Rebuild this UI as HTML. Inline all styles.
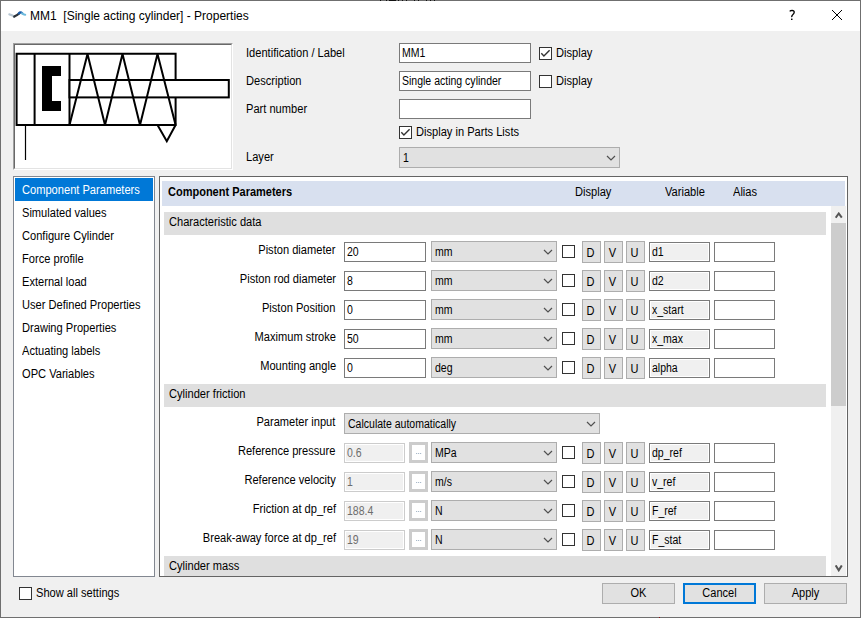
<!DOCTYPE html><html><head><meta charset="utf-8"><style>
html,body{margin:0;padding:0;width:861px;height:618px;overflow:hidden;background:#f0f0f0;font-family:"Liberation Sans", sans-serif;}
.t{position:absolute;font-size:11px;line-height:13px;white-space:pre;color:#000;}
.b{font-weight:bold}
.T{font-size:12px;line-height:14px;transform-origin:left top}
</style></head><body>
<div style="position:absolute;left:0px;top:0px;width:861px;height:618px;box-sizing:border-box;border:1px solid #6f6f6f;background:#f0f0f0"></div>
<div style="position:absolute;left:1px;top:1px;width:859px;height:30px;box-sizing:border-box;background:#fff"></div>
<div style="position:absolute;left:380px;top:0;width:1px;height:1px;background:#111"></div>
<div style="position:absolute;left:386px;top:0;width:1px;height:1px;background:#111"></div>
<div style="position:absolute;left:389px;top:0;width:1px;height:1px;background:#111"></div>
<div style="position:absolute;left:390px;top:0;width:1px;height:1px;background:#111"></div>
<div style="position:absolute;left:391px;top:0;width:1px;height:1px;background:#111"></div>
<div style="position:absolute;left:392px;top:0;width:1px;height:1px;background:#111"></div>
<div style="position:absolute;left:393px;top:0;width:1px;height:1px;background:#111"></div>
<div style="position:absolute;left:394px;top:0;width:1px;height:1px;background:#111"></div>
<div style="position:absolute;left:395px;top:0;width:1px;height:1px;background:#111"></div>
<div style="position:absolute;left:398px;top:0;width:1px;height:1px;background:#111"></div>
<div style="position:absolute;left:402px;top:0;width:1px;height:1px;background:#111"></div>
<div style="position:absolute;left:406px;top:0;width:1px;height:1px;background:#111"></div>
<div style="position:absolute;left:414px;top:0;width:1px;height:1px;background:#111"></div>
<div style="position:absolute;left:418px;top:0;width:1px;height:1px;background:#111"></div>
<div style="position:absolute;left:426px;top:0;width:1px;height:1px;background:#111"></div>
<div style="position:absolute;left:430px;top:0;width:1px;height:1px;background:#111"></div>
<div style="position:absolute;left:434px;top:0;width:1px;height:1px;background:#111"></div>
<div style="position:absolute;left:659px;top:617px;width:1px;height:1px;background:#8a1010"></div>
<svg style="position:absolute;left:8px;top:10px" width="19" height="9" viewBox="0 0 19 9"><path d="M1.4 4.3 Q4 4.8 6.3 6.6" stroke="#b7c7d3" stroke-width="2.3" fill="none" stroke-linecap="round"/><path d="M6.3 6.6 Q9 5.2 11.3 3.4" stroke="#2c3238" stroke-width="2.3" fill="none" stroke-linecap="round"/><path d="M10.8 3.4 Q12.4 1.5 14.2 3.3" stroke="#1858a8" stroke-width="2.3" fill="none" stroke-linecap="round"/><path d="M14 3.3 Q15.5 4.8 17.2 4.7" stroke="#6cbadd" stroke-width="2.1" fill="none" stroke-linecap="round"/></svg>
<div class="t" style="left:30px;top:9px;font-size:12px;line-height:14px;color:#000">MM1  [Single acting cylinder] - Properties</div>
<svg style="position:absolute;left:788px;top:8px" width="10" height="14" viewBox="0 0 10 14"><path d="M1.7 3.4 Q2.6 2.4 4.1 2.4 Q6.3 2.5 6.2 4.3 Q6.1 5.5 4.9 6.6 Q3.6 7.7 3.7 9.1" fill="none" stroke="#000" stroke-width="1.35"/><rect x="3" y="10.6" width="1.5" height="1.4" fill="#000"/></svg>
<svg style="position:absolute;left:832px;top:10px" width="11" height="11" viewBox="0 0 11 11"><path d="M0 0 L10 10 M10 0 L0 10" stroke="#000" stroke-width="1"/></svg>
<div style="position:absolute;left:13px;top:43px;width:220px;height:127px;box-sizing:border-box;border:1px solid #a0a0a0;border-right-color:#fff;border-bottom-color:#fff;background:#fff"></div>
<div style="position:absolute;left:14px;top:44px;width:218px;height:125px;box-sizing:border-box;border:1px solid #696969;border-right-color:#e3e3e3;border-bottom-color:#e3e3e3;background:#fff"></div>
<svg style="position:absolute;left:0;top:0" width="240" height="175" viewBox="0 0 240 175"><g fill="none" stroke="#000" stroke-width="2"><rect x="16.6" y="53.75" width="159" height="71.25"/><line x1="34.6" y1="54" x2="34.6" y2="125"/><line x1="69.5" y1="54" x2="69.5" y2="125"/><rect x="69.5" y="80" width="159.3" height="17.4" fill="#fff"/><polyline points="69.5,125 87.5,54 105,125 122.5,54 140,125 157.5,54 175.6,125"/><polyline points="157.5,125 166.8,141.2 175.6,125"/></g><line x1="25.5" y1="125" x2="25.5" y2="160" stroke="#000" stroke-width="1.2"/><path d="M42 66 H61 V76 H52 V101 H61 V111 H42 Z" fill="#000"/></svg>
<div class="t T " style="left:246px;top:46px;transform:scaleX(0.925);">Identification / Label</div>
<div class="t T " style="left:246px;top:74px;transform:scaleX(0.925);">Description</div>
<div class="t T " style="left:246px;top:102px;transform:scaleX(0.925);">Part number</div>
<div class="t T " style="left:246px;top:150px;transform:scaleX(0.925);">Layer</div>
<div style="position:absolute;left:399px;top:43px;width:132px;height:20px;box-sizing:border-box;border:1px solid #7a7a7a;background:#fff"></div>
<div class="t T " style="left:402px;top:46px;transform:scaleX(0.876);">MM1</div>
<div style="position:absolute;left:399px;top:71px;width:132px;height:20px;box-sizing:border-box;border:1px solid #7a7a7a;background:#fff"></div>
<div class="t T " style="left:402px;top:74px;transform:scaleX(0.876);">Single acting cylinder</div>
<div style="position:absolute;left:399px;top:99px;width:132px;height:20px;box-sizing:border-box;border:1px solid #7a7a7a;background:#fff"></div>
<div style="position:absolute;left:539px;top:47px;width:13px;height:13px;box-sizing:border-box;border:1px solid #333333;background:#fff"></div>
<svg style="position:absolute;left:539px;top:47px" width="13" height="13" viewBox="0 0 13 13"><path d="M2.3 6.3 L4.9 9 L10.6 3.3" fill="none" stroke="#333" stroke-width="1.4"/></svg>
<div class="t T " style="left:556px;top:46px;transform:scaleX(0.925);">Display</div>
<div style="position:absolute;left:539px;top:75px;width:13px;height:13px;box-sizing:border-box;border:1px solid #333333;background:#fff"></div>
<div class="t T " style="left:556px;top:74px;transform:scaleX(0.925);">Display</div>
<div style="position:absolute;left:399px;top:126px;width:13px;height:13px;box-sizing:border-box;border:1px solid #333333;background:#fff"></div>
<svg style="position:absolute;left:399px;top:126px" width="13" height="13" viewBox="0 0 13 13"><path d="M2.3 6.3 L4.9 9 L10.6 3.3" fill="none" stroke="#333" stroke-width="1.4"/></svg>
<div class="t T " style="left:416px;top:125px;transform:scaleX(0.925);">Display in Parts Lists</div>
<div style="position:absolute;left:399px;top:147px;width:221px;height:21px;box-sizing:border-box;border:1px solid #adadad;background:#e1e1e1"></div>
<div class="t T " style="left:403px;top:151px;transform:scaleX(0.876);">1</div>
<svg style="position:absolute;left:606px;top:155px" width="10" height="6" viewBox="0 0 10 6"><path d="M1 1 L5 5 L9 1" fill="none" stroke="#505050" stroke-width="1.2"/></svg>
<div style="position:absolute;left:13px;top:176px;width:142px;height:401px;box-sizing:border-box;border:1px solid #828790;background:#fff"></div>
<div style="position:absolute;left:15px;top:178px;width:138px;height:23px;box-sizing:border-box;background:#0078d7"></div>
<div class="t T " style="left:22px;top:183px;transform:scaleX(0.925);color:#fff">Component Parameters</div>
<div class="t T " style="left:22px;top:206px;transform:scaleX(0.925);">Simulated values</div>
<div class="t T " style="left:22px;top:229px;transform:scaleX(0.925);">Configure Cylinder</div>
<div class="t T " style="left:22px;top:252px;transform:scaleX(0.925);">Force profile</div>
<div class="t T " style="left:22px;top:275px;transform:scaleX(0.925);">External load</div>
<div class="t T " style="left:22px;top:298px;transform:scaleX(0.925);">User Defined Properties</div>
<div class="t T " style="left:22px;top:321px;transform:scaleX(0.925);">Drawing Properties</div>
<div class="t T " style="left:22px;top:344px;transform:scaleX(0.925);">Actuating labels</div>
<div class="t T " style="left:22px;top:367px;transform:scaleX(0.925);">OPC Variables</div>
<div style="position:absolute;left:159px;top:176px;width:689px;height:401px;box-sizing:border-box;border:1px solid #646464;background:#fff"></div>
<div style="position:absolute;left:162px;top:181px;width:683px;height:25px;box-sizing:border-box;background:#d8e0ef"></div>
<div class="t T b" style="left:168px;top:185px;transform:scaleX(0.917);">Component Parameters</div>
<div class="t T " style="left:575px;top:185px;transform:scaleX(0.925);">Display</div>
<div class="t T " style="left:665px;top:185px;transform:scaleX(0.925);">Variable</div>
<div class="t T " style="left:733px;top:185px;transform:scaleX(0.925);">Alias</div>
<div style="position:absolute;left:831px;top:206px;width:15px;height:370px;box-sizing:border-box;background:#f0f0f0"></div>
<div style="position:absolute;left:831px;top:223px;width:15px;height:183px;box-sizing:border-box;background:#cdcdcd"></div>
<svg style="position:absolute;left:835px;top:212px" width="8" height="7" viewBox="0 0 8 7"><path d="M0.7 5.7 L3.75 1.5 L6.8 5.7" fill="none" stroke="#555" stroke-width="2"/></svg>
<svg style="position:absolute;left:835px;top:565px" width="8" height="7" viewBox="0 0 8 7"><path d="M0.7 0.4 L3.75 5.3 L6.8 0.4" fill="none" stroke="#555" stroke-width="2"/></svg>
<div style="position:absolute;left:164px;top:212px;width:662px;height:23px;box-sizing:border-box;background:#dfdfdf"></div>
<div class="t T " style="left:169px;top:215px;transform:scaleX(0.925);">Characteristic data</div>
<div class="t T" style="right:525.4px;top:243px;transform:scaleX(0.925);transform-origin:right top;">Piston diameter</div>
<div style="position:absolute;left:344px;top:242px;width:82px;height:20px;box-sizing:border-box;border:1px solid #7a7a7a;background:#fff"></div>
<div class="t T " style="left:347px;top:245px;transform:scaleX(0.876);">20</div>
<div style="position:absolute;left:431px;top:241px;width:126px;height:21px;box-sizing:border-box;border:1px solid #adadad;background:#e1e1e1"></div>
<div class="t T " style="left:435px;top:245px;transform:scaleX(0.876);">mm</div>
<svg style="position:absolute;left:543px;top:249px" width="10" height="6" viewBox="0 0 10 6"><path d="M1 1 L5 5 L9 1" fill="none" stroke="#505050" stroke-width="1.2"/></svg>
<div style="position:absolute;left:562px;top:245px;width:13px;height:13px;box-sizing:border-box;border:1px solid #333333;background:#fff"></div>
<div style="position:absolute;left:582px;top:241px;width:19px;height:22px;box-sizing:border-box;border:1px solid #adadad;background:#e1e1e1"></div>
<div class="t T" style="left:580.5px;top:246px;width:19px;text-align:center;transform:scaleX(0.917);transform-origin:center top">D</div>
<div style="position:absolute;left:604px;top:241px;width:19px;height:22px;box-sizing:border-box;border:1px solid #adadad;background:#e1e1e1"></div>
<div class="t T" style="left:602.5px;top:246px;width:19px;text-align:center;transform:scaleX(0.917);transform-origin:center top">V</div>
<div style="position:absolute;left:626px;top:241px;width:19px;height:22px;box-sizing:border-box;border:1px solid #adadad;background:#e1e1e1"></div>
<div class="t T" style="left:624.5px;top:246px;width:19px;text-align:center;transform:scaleX(0.917);transform-origin:center top">U</div>
<div style="position:absolute;left:649px;top:242px;width:61px;height:20px;box-sizing:border-box;border:1px solid #7a7a7a;background:#f0f0f0;box-shadow:inset 0 0 0 1px #fff"></div>
<div class="t T " style="left:652px;top:245px;transform:scaleX(0.876);">d1</div>
<div style="position:absolute;left:714px;top:242px;width:61px;height:20px;box-sizing:border-box;border:1px solid #7a7a7a;background:#fff"></div>
<div class="t T" style="right:525.4px;top:272px;transform:scaleX(0.925);transform-origin:right top;">Piston rod diameter</div>
<div style="position:absolute;left:344px;top:271px;width:82px;height:20px;box-sizing:border-box;border:1px solid #7a7a7a;background:#fff"></div>
<div class="t T " style="left:347px;top:274px;transform:scaleX(0.876);">8</div>
<div style="position:absolute;left:431px;top:270px;width:126px;height:21px;box-sizing:border-box;border:1px solid #adadad;background:#e1e1e1"></div>
<div class="t T " style="left:435px;top:274px;transform:scaleX(0.876);">mm</div>
<svg style="position:absolute;left:543px;top:278px" width="10" height="6" viewBox="0 0 10 6"><path d="M1 1 L5 5 L9 1" fill="none" stroke="#505050" stroke-width="1.2"/></svg>
<div style="position:absolute;left:562px;top:274px;width:13px;height:13px;box-sizing:border-box;border:1px solid #333333;background:#fff"></div>
<div style="position:absolute;left:582px;top:270px;width:19px;height:22px;box-sizing:border-box;border:1px solid #adadad;background:#e1e1e1"></div>
<div class="t T" style="left:580.5px;top:275px;width:19px;text-align:center;transform:scaleX(0.917);transform-origin:center top">D</div>
<div style="position:absolute;left:604px;top:270px;width:19px;height:22px;box-sizing:border-box;border:1px solid #adadad;background:#e1e1e1"></div>
<div class="t T" style="left:602.5px;top:275px;width:19px;text-align:center;transform:scaleX(0.917);transform-origin:center top">V</div>
<div style="position:absolute;left:626px;top:270px;width:19px;height:22px;box-sizing:border-box;border:1px solid #adadad;background:#e1e1e1"></div>
<div class="t T" style="left:624.5px;top:275px;width:19px;text-align:center;transform:scaleX(0.917);transform-origin:center top">U</div>
<div style="position:absolute;left:649px;top:271px;width:61px;height:20px;box-sizing:border-box;border:1px solid #7a7a7a;background:#f0f0f0;box-shadow:inset 0 0 0 1px #fff"></div>
<div class="t T " style="left:652px;top:274px;transform:scaleX(0.876);">d2</div>
<div style="position:absolute;left:714px;top:271px;width:61px;height:20px;box-sizing:border-box;border:1px solid #7a7a7a;background:#fff"></div>
<div class="t T" style="right:525.4px;top:301px;transform:scaleX(0.925);transform-origin:right top;">Piston Position</div>
<div style="position:absolute;left:344px;top:300px;width:82px;height:20px;box-sizing:border-box;border:1px solid #7a7a7a;background:#fff"></div>
<div class="t T " style="left:347px;top:303px;transform:scaleX(0.876);">0</div>
<div style="position:absolute;left:431px;top:299px;width:126px;height:21px;box-sizing:border-box;border:1px solid #adadad;background:#e1e1e1"></div>
<div class="t T " style="left:435px;top:303px;transform:scaleX(0.876);">mm</div>
<svg style="position:absolute;left:543px;top:307px" width="10" height="6" viewBox="0 0 10 6"><path d="M1 1 L5 5 L9 1" fill="none" stroke="#505050" stroke-width="1.2"/></svg>
<div style="position:absolute;left:562px;top:303px;width:13px;height:13px;box-sizing:border-box;border:1px solid #333333;background:#fff"></div>
<div style="position:absolute;left:582px;top:299px;width:19px;height:22px;box-sizing:border-box;border:1px solid #adadad;background:#e1e1e1"></div>
<div class="t T" style="left:580.5px;top:304px;width:19px;text-align:center;transform:scaleX(0.917);transform-origin:center top">D</div>
<div style="position:absolute;left:604px;top:299px;width:19px;height:22px;box-sizing:border-box;border:1px solid #adadad;background:#e1e1e1"></div>
<div class="t T" style="left:602.5px;top:304px;width:19px;text-align:center;transform:scaleX(0.917);transform-origin:center top">V</div>
<div style="position:absolute;left:626px;top:299px;width:19px;height:22px;box-sizing:border-box;border:1px solid #adadad;background:#e1e1e1"></div>
<div class="t T" style="left:624.5px;top:304px;width:19px;text-align:center;transform:scaleX(0.917);transform-origin:center top">U</div>
<div style="position:absolute;left:649px;top:300px;width:61px;height:20px;box-sizing:border-box;border:1px solid #7a7a7a;background:#f0f0f0;box-shadow:inset 0 0 0 1px #fff"></div>
<div class="t T " style="left:652px;top:303px;transform:scaleX(0.876);">x_start</div>
<div style="position:absolute;left:714px;top:300px;width:61px;height:20px;box-sizing:border-box;border:1px solid #7a7a7a;background:#fff"></div>
<div class="t T" style="right:525.4px;top:330px;transform:scaleX(0.925);transform-origin:right top;">Maximum stroke</div>
<div style="position:absolute;left:344px;top:329px;width:82px;height:20px;box-sizing:border-box;border:1px solid #7a7a7a;background:#fff"></div>
<div class="t T " style="left:347px;top:332px;transform:scaleX(0.876);">50</div>
<div style="position:absolute;left:431px;top:328px;width:126px;height:21px;box-sizing:border-box;border:1px solid #adadad;background:#e1e1e1"></div>
<div class="t T " style="left:435px;top:332px;transform:scaleX(0.876);">mm</div>
<svg style="position:absolute;left:543px;top:336px" width="10" height="6" viewBox="0 0 10 6"><path d="M1 1 L5 5 L9 1" fill="none" stroke="#505050" stroke-width="1.2"/></svg>
<div style="position:absolute;left:562px;top:332px;width:13px;height:13px;box-sizing:border-box;border:1px solid #333333;background:#fff"></div>
<div style="position:absolute;left:582px;top:328px;width:19px;height:22px;box-sizing:border-box;border:1px solid #adadad;background:#e1e1e1"></div>
<div class="t T" style="left:580.5px;top:333px;width:19px;text-align:center;transform:scaleX(0.917);transform-origin:center top">D</div>
<div style="position:absolute;left:604px;top:328px;width:19px;height:22px;box-sizing:border-box;border:1px solid #adadad;background:#e1e1e1"></div>
<div class="t T" style="left:602.5px;top:333px;width:19px;text-align:center;transform:scaleX(0.917);transform-origin:center top">V</div>
<div style="position:absolute;left:626px;top:328px;width:19px;height:22px;box-sizing:border-box;border:1px solid #adadad;background:#e1e1e1"></div>
<div class="t T" style="left:624.5px;top:333px;width:19px;text-align:center;transform:scaleX(0.917);transform-origin:center top">U</div>
<div style="position:absolute;left:649px;top:329px;width:61px;height:20px;box-sizing:border-box;border:1px solid #7a7a7a;background:#f0f0f0;box-shadow:inset 0 0 0 1px #fff"></div>
<div class="t T " style="left:652px;top:332px;transform:scaleX(0.876);">x_max</div>
<div style="position:absolute;left:714px;top:329px;width:61px;height:20px;box-sizing:border-box;border:1px solid #7a7a7a;background:#fff"></div>
<div class="t T" style="right:525.4px;top:359px;transform:scaleX(0.925);transform-origin:right top;">Mounting angle</div>
<div style="position:absolute;left:344px;top:358px;width:82px;height:20px;box-sizing:border-box;border:1px solid #7a7a7a;background:#fff"></div>
<div class="t T " style="left:347px;top:361px;transform:scaleX(0.876);">0</div>
<div style="position:absolute;left:431px;top:357px;width:126px;height:21px;box-sizing:border-box;border:1px solid #adadad;background:#e1e1e1"></div>
<div class="t T " style="left:435px;top:361px;transform:scaleX(0.876);">deg</div>
<svg style="position:absolute;left:543px;top:365px" width="10" height="6" viewBox="0 0 10 6"><path d="M1 1 L5 5 L9 1" fill="none" stroke="#505050" stroke-width="1.2"/></svg>
<div style="position:absolute;left:562px;top:361px;width:13px;height:13px;box-sizing:border-box;border:1px solid #333333;background:#fff"></div>
<div style="position:absolute;left:582px;top:357px;width:19px;height:22px;box-sizing:border-box;border:1px solid #adadad;background:#e1e1e1"></div>
<div class="t T" style="left:580.5px;top:362px;width:19px;text-align:center;transform:scaleX(0.917);transform-origin:center top">D</div>
<div style="position:absolute;left:604px;top:357px;width:19px;height:22px;box-sizing:border-box;border:1px solid #adadad;background:#e1e1e1"></div>
<div class="t T" style="left:602.5px;top:362px;width:19px;text-align:center;transform:scaleX(0.917);transform-origin:center top">V</div>
<div style="position:absolute;left:626px;top:357px;width:19px;height:22px;box-sizing:border-box;border:1px solid #adadad;background:#e1e1e1"></div>
<div class="t T" style="left:624.5px;top:362px;width:19px;text-align:center;transform:scaleX(0.917);transform-origin:center top">U</div>
<div style="position:absolute;left:649px;top:358px;width:61px;height:20px;box-sizing:border-box;border:1px solid #7a7a7a;background:#f0f0f0;box-shadow:inset 0 0 0 1px #fff"></div>
<div class="t T " style="left:652px;top:361px;transform:scaleX(0.876);">alpha</div>
<div style="position:absolute;left:714px;top:358px;width:61px;height:20px;box-sizing:border-box;border:1px solid #7a7a7a;background:#fff"></div>
<div style="position:absolute;left:164px;top:384px;width:662px;height:23px;box-sizing:border-box;background:#dfdfdf"></div>
<div class="t T " style="left:169px;top:387px;transform:scaleX(0.925);">Cylinder friction</div>
<div class="t T" style="right:525.4px;top:415px;transform:scaleX(0.925);transform-origin:right top;">Parameter input</div>
<div style="position:absolute;left:344px;top:413px;width:256px;height:21px;box-sizing:border-box;border:1px solid #adadad;background:#e1e1e1"></div>
<div class="t T " style="left:348px;top:417px;transform:scaleX(0.876);">Calculate automatically</div>
<svg style="position:absolute;left:586px;top:421px" width="10" height="6" viewBox="0 0 10 6"><path d="M1 1 L5 5 L9 1" fill="none" stroke="#505050" stroke-width="1.2"/></svg>
<div class="t T" style="right:525.4px;top:444px;transform:scaleX(0.925);transform-origin:right top;">Reference pressure</div>
<div style="position:absolute;left:344px;top:443px;width:61px;height:20px;box-sizing:border-box;border:1px solid #cccccc;background:#f0f0f0;box-shadow:inset 0 0 0 1px #fff"></div>
<div class="t T " style="left:347px;top:446px;transform:scaleX(0.876);color:#6d6d6d">0.6</div>
<div style="position:absolute;left:409px;top:442px;width:19px;height:21px;box-sizing:border-box;border:3px solid #cccccc;background:#fff"></div>
<div style="position:absolute;left:416px;top:453px;width:6px;height:1px;background:repeating-linear-gradient(90deg,#a9b9c9 0 1px,#eef2f6 1px 2px)"></div>
<div style="position:absolute;left:431px;top:442px;width:126px;height:21px;box-sizing:border-box;border:1px solid #adadad;background:#e1e1e1"></div>
<div class="t T " style="left:435px;top:446px;transform:scaleX(0.876);">MPa</div>
<svg style="position:absolute;left:543px;top:450px" width="10" height="6" viewBox="0 0 10 6"><path d="M1 1 L5 5 L9 1" fill="none" stroke="#505050" stroke-width="1.2"/></svg>
<div style="position:absolute;left:562px;top:446px;width:13px;height:13px;box-sizing:border-box;border:1px solid #333333;background:#fff"></div>
<div style="position:absolute;left:582px;top:442px;width:19px;height:22px;box-sizing:border-box;border:1px solid #adadad;background:#e1e1e1"></div>
<div class="t T" style="left:580.5px;top:447px;width:19px;text-align:center;transform:scaleX(0.917);transform-origin:center top">D</div>
<div style="position:absolute;left:604px;top:442px;width:19px;height:22px;box-sizing:border-box;border:1px solid #adadad;background:#e1e1e1"></div>
<div class="t T" style="left:602.5px;top:447px;width:19px;text-align:center;transform:scaleX(0.917);transform-origin:center top">V</div>
<div style="position:absolute;left:626px;top:442px;width:19px;height:22px;box-sizing:border-box;border:1px solid #adadad;background:#e1e1e1"></div>
<div class="t T" style="left:624.5px;top:447px;width:19px;text-align:center;transform:scaleX(0.917);transform-origin:center top">U</div>
<div style="position:absolute;left:649px;top:443px;width:61px;height:20px;box-sizing:border-box;border:1px solid #7a7a7a;background:#f0f0f0;box-shadow:inset 0 0 0 1px #fff"></div>
<div class="t T " style="left:652px;top:446px;transform:scaleX(0.876);">dp_ref</div>
<div style="position:absolute;left:714px;top:443px;width:61px;height:20px;box-sizing:border-box;border:1px solid #7a7a7a;background:#fff"></div>
<div class="t T" style="right:525.4px;top:473px;transform:scaleX(0.925);transform-origin:right top;">Reference velocity</div>
<div style="position:absolute;left:344px;top:472px;width:61px;height:20px;box-sizing:border-box;border:1px solid #cccccc;background:#f0f0f0;box-shadow:inset 0 0 0 1px #fff"></div>
<div class="t T " style="left:347px;top:475px;transform:scaleX(0.876);color:#6d6d6d">1</div>
<div style="position:absolute;left:409px;top:471px;width:19px;height:21px;box-sizing:border-box;border:3px solid #cccccc;background:#fff"></div>
<div style="position:absolute;left:416px;top:482px;width:6px;height:1px;background:repeating-linear-gradient(90deg,#a9b9c9 0 1px,#eef2f6 1px 2px)"></div>
<div style="position:absolute;left:431px;top:471px;width:126px;height:21px;box-sizing:border-box;border:1px solid #adadad;background:#e1e1e1"></div>
<div class="t T " style="left:435px;top:475px;transform:scaleX(0.876);">m/s</div>
<svg style="position:absolute;left:543px;top:479px" width="10" height="6" viewBox="0 0 10 6"><path d="M1 1 L5 5 L9 1" fill="none" stroke="#505050" stroke-width="1.2"/></svg>
<div style="position:absolute;left:562px;top:475px;width:13px;height:13px;box-sizing:border-box;border:1px solid #333333;background:#fff"></div>
<div style="position:absolute;left:582px;top:471px;width:19px;height:22px;box-sizing:border-box;border:1px solid #adadad;background:#e1e1e1"></div>
<div class="t T" style="left:580.5px;top:476px;width:19px;text-align:center;transform:scaleX(0.917);transform-origin:center top">D</div>
<div style="position:absolute;left:604px;top:471px;width:19px;height:22px;box-sizing:border-box;border:1px solid #adadad;background:#e1e1e1"></div>
<div class="t T" style="left:602.5px;top:476px;width:19px;text-align:center;transform:scaleX(0.917);transform-origin:center top">V</div>
<div style="position:absolute;left:626px;top:471px;width:19px;height:22px;box-sizing:border-box;border:1px solid #adadad;background:#e1e1e1"></div>
<div class="t T" style="left:624.5px;top:476px;width:19px;text-align:center;transform:scaleX(0.917);transform-origin:center top">U</div>
<div style="position:absolute;left:649px;top:472px;width:61px;height:20px;box-sizing:border-box;border:1px solid #7a7a7a;background:#f0f0f0;box-shadow:inset 0 0 0 1px #fff"></div>
<div class="t T " style="left:652px;top:475px;transform:scaleX(0.876);">v_ref</div>
<div style="position:absolute;left:714px;top:472px;width:61px;height:20px;box-sizing:border-box;border:1px solid #7a7a7a;background:#fff"></div>
<div class="t T" style="right:525.4px;top:502px;transform:scaleX(0.925);transform-origin:right top;">Friction at dp_ref</div>
<div style="position:absolute;left:344px;top:501px;width:61px;height:20px;box-sizing:border-box;border:1px solid #cccccc;background:#f0f0f0;box-shadow:inset 0 0 0 1px #fff"></div>
<div class="t T " style="left:347px;top:504px;transform:scaleX(0.876);color:#6d6d6d">188.4</div>
<div style="position:absolute;left:409px;top:500px;width:19px;height:21px;box-sizing:border-box;border:3px solid #cccccc;background:#fff"></div>
<div style="position:absolute;left:416px;top:511px;width:6px;height:1px;background:repeating-linear-gradient(90deg,#a9b9c9 0 1px,#eef2f6 1px 2px)"></div>
<div style="position:absolute;left:431px;top:500px;width:126px;height:21px;box-sizing:border-box;border:1px solid #adadad;background:#e1e1e1"></div>
<div class="t T " style="left:435px;top:504px;transform:scaleX(0.876);">N</div>
<svg style="position:absolute;left:543px;top:508px" width="10" height="6" viewBox="0 0 10 6"><path d="M1 1 L5 5 L9 1" fill="none" stroke="#505050" stroke-width="1.2"/></svg>
<div style="position:absolute;left:562px;top:504px;width:13px;height:13px;box-sizing:border-box;border:1px solid #333333;background:#fff"></div>
<div style="position:absolute;left:582px;top:500px;width:19px;height:22px;box-sizing:border-box;border:1px solid #adadad;background:#e1e1e1"></div>
<div class="t T" style="left:580.5px;top:505px;width:19px;text-align:center;transform:scaleX(0.917);transform-origin:center top">D</div>
<div style="position:absolute;left:604px;top:500px;width:19px;height:22px;box-sizing:border-box;border:1px solid #adadad;background:#e1e1e1"></div>
<div class="t T" style="left:602.5px;top:505px;width:19px;text-align:center;transform:scaleX(0.917);transform-origin:center top">V</div>
<div style="position:absolute;left:626px;top:500px;width:19px;height:22px;box-sizing:border-box;border:1px solid #adadad;background:#e1e1e1"></div>
<div class="t T" style="left:624.5px;top:505px;width:19px;text-align:center;transform:scaleX(0.917);transform-origin:center top">U</div>
<div style="position:absolute;left:649px;top:501px;width:61px;height:20px;box-sizing:border-box;border:1px solid #7a7a7a;background:#f0f0f0;box-shadow:inset 0 0 0 1px #fff"></div>
<div class="t T " style="left:652px;top:504px;transform:scaleX(0.876);">F_ref</div>
<div style="position:absolute;left:714px;top:501px;width:61px;height:20px;box-sizing:border-box;border:1px solid #7a7a7a;background:#fff"></div>
<div class="t T" style="right:525.4px;top:531px;transform:scaleX(0.925);transform-origin:right top;">Break-away force at dp_ref</div>
<div style="position:absolute;left:344px;top:530px;width:61px;height:20px;box-sizing:border-box;border:1px solid #cccccc;background:#f0f0f0;box-shadow:inset 0 0 0 1px #fff"></div>
<div class="t T " style="left:347px;top:533px;transform:scaleX(0.876);color:#6d6d6d">19</div>
<div style="position:absolute;left:409px;top:529px;width:19px;height:21px;box-sizing:border-box;border:3px solid #cccccc;background:#fff"></div>
<div style="position:absolute;left:416px;top:540px;width:6px;height:1px;background:repeating-linear-gradient(90deg,#a9b9c9 0 1px,#eef2f6 1px 2px)"></div>
<div style="position:absolute;left:431px;top:529px;width:126px;height:21px;box-sizing:border-box;border:1px solid #adadad;background:#e1e1e1"></div>
<div class="t T " style="left:435px;top:533px;transform:scaleX(0.876);">N</div>
<svg style="position:absolute;left:543px;top:537px" width="10" height="6" viewBox="0 0 10 6"><path d="M1 1 L5 5 L9 1" fill="none" stroke="#505050" stroke-width="1.2"/></svg>
<div style="position:absolute;left:562px;top:533px;width:13px;height:13px;box-sizing:border-box;border:1px solid #333333;background:#fff"></div>
<div style="position:absolute;left:582px;top:529px;width:19px;height:22px;box-sizing:border-box;border:1px solid #adadad;background:#e1e1e1"></div>
<div class="t T" style="left:580.5px;top:534px;width:19px;text-align:center;transform:scaleX(0.917);transform-origin:center top">D</div>
<div style="position:absolute;left:604px;top:529px;width:19px;height:22px;box-sizing:border-box;border:1px solid #adadad;background:#e1e1e1"></div>
<div class="t T" style="left:602.5px;top:534px;width:19px;text-align:center;transform:scaleX(0.917);transform-origin:center top">V</div>
<div style="position:absolute;left:626px;top:529px;width:19px;height:22px;box-sizing:border-box;border:1px solid #adadad;background:#e1e1e1"></div>
<div class="t T" style="left:624.5px;top:534px;width:19px;text-align:center;transform:scaleX(0.917);transform-origin:center top">U</div>
<div style="position:absolute;left:649px;top:530px;width:61px;height:20px;box-sizing:border-box;border:1px solid #7a7a7a;background:#f0f0f0;box-shadow:inset 0 0 0 1px #fff"></div>
<div class="t T " style="left:652px;top:533px;transform:scaleX(0.876);">F_stat</div>
<div style="position:absolute;left:714px;top:530px;width:61px;height:20px;box-sizing:border-box;border:1px solid #7a7a7a;background:#fff"></div>
<div style="position:absolute;left:164px;top:556px;width:662px;height:20px;box-sizing:border-box;background:#dfdfdf"></div>
<div class="t T " style="left:169px;top:559px;transform:scaleX(0.925);">Cylinder mass</div>
<div style="position:absolute;left:19px;top:587px;width:13px;height:13px;box-sizing:border-box;border:1px solid #333333;background:#fff"></div>
<div class="t T " style="left:36px;top:586px;transform:scaleX(0.925);">Show all settings</div>
<div style="position:absolute;left:602px;top:583px;width:73px;height:21px;box-sizing:border-box;border:1px solid #adadad;background:#e1e1e1"></div>
<div class="t T" style="left:602px;top:586px;width:73px;text-align:center;transform:scaleX(0.917);transform-origin:center top">OK</div>
<div style="position:absolute;left:683px;top:583px;width:73px;height:21px;box-sizing:border-box;border:2px solid #0078d7;background:#e1e1e1"></div>
<div class="t T" style="left:683px;top:586px;width:73px;text-align:center;transform:scaleX(0.917);transform-origin:center top">Cancel</div>
<div style="position:absolute;left:764px;top:583px;width:83px;height:21px;box-sizing:border-box;border:1px solid #adadad;background:#e1e1e1"></div>
<div class="t T" style="left:764px;top:586px;width:83px;text-align:center;transform:scaleX(0.917);transform-origin:center top">Apply</div>
</body></html>
